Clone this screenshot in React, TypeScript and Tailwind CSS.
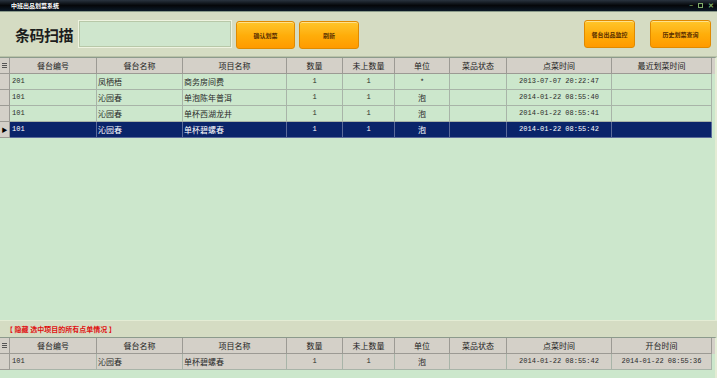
import React from "react";

const cols = "grid grid-cols-[10px_87px_86px_104px_56px_52px_55px_57px_105px_100px]";

const topHead = ["餐台编号", "餐台名称", "项目名称", "数量", "未上数量", "单位", "菜品状态", "点菜时间", "最近划菜时间"];
const bottomHead = ["餐台编号", "餐台名称", "项目名称", "数量", "未上数量", "单位", "菜品状态", "点菜时间", "开台时间"];

type Row = { no: string; table: string; item: string; qty: string; left: string; unit: string; status: string; time: string; last: string };

const rows: Row[] = [
  { no: "201", table: "凤栖梧", item: "商务房间费", qty: "1", left: "1", unit: "*", status: "", time: "2013-07-07 20:22:47", last: "" },
  { no: "101", table: "沁园春", item: "单泡陈年普洱", qty: "1", left: "1", unit: "泡", status: "", time: "2014-01-22 08:55:40", last: "" },
  { no: "101", table: "沁园春", item: "单杯西湖龙井", qty: "1", left: "1", unit: "泡", status: "", time: "2014-01-22 08:55:41", last: "" },
  { no: "101", table: "沁园春", item: "单杯碧螺春", qty: "1", left: "1", unit: "泡", status: "", time: "2014-01-22 08:55:42", last: "" },
];

const cjk = "font-['SimSun','Noto_Sans_CJK_SC',sans-serif]";
const mono = "font-['Liberation_Mono','Noto_Sans_CJK_SC',monospace] font-normal text-[7px]";

function HeaderRow({ labels }: { labels: string[] }) {
  return (
    <div className={`${cols} h-[16px] bg-[#d4d0c8] text-[8px] text-[#222]`}>
      <div className="flex items-center justify-center border-r border-b border-[#9c9a94]">
        <span className="block w-[5px] h-[5px] bg-[repeating-linear-gradient(to_bottom,#555_0_1px,#d4d0c8_1px_2px)]" />
      </div>
      {labels.map((l) => (
        <div key={l} className="flex items-center justify-center border-r border-b border-[#9c9a94] leading-none">
          {l}
        </div>
      ))}
    </div>
  );
}

function DataRow({ r, selected, bg, last }: { r: Row; selected?: boolean; bg: string; last: string }) {
  const cell = selected
    ? "border-r border-b border-[#5a6a9a] bg-[#0a246a] text-white"
    : `border-r border-b border-[#a8b4a8] ${bg} text-[#2a2a2a]`;
  return (
    <div className={`${cols} h-[16px] text-[8px]`}>
      <div className="flex items-center justify-center border-r border-b border-[#9c9a94] bg-[#d4d0c8]">
        {selected && <span className="text-[6px] leading-none text-black">▶</span>}
      </div>
      <div className={`${cell} ${mono} flex items-center pl-[2px]`}>{r.no}</div>
      <div className={`${cell} flex items-center pl-[1px]`}>{r.table}</div>
      <div className={`${cell} flex items-center pl-[1px]`}>{r.item}</div>
      <div className={`${cell} ${mono} flex items-center justify-center`}>{r.qty}</div>
      <div className={`${cell} ${mono} flex items-center justify-center`}>{r.left}</div>
      <div className={`${cell} flex items-center justify-center`}>{r.unit}</div>
      <div className={`${cell} flex items-center justify-center`}>{r.status}</div>
      <div className={`${cell} ${mono} flex items-center justify-center`}>{r.time}</div>
      <div className={`${cell} ${mono} flex items-center justify-center`}>{last}</div>
    </div>
  );
}

function OrangeButton({ label, w }: { label: string; w: string }) {
  return (
    <button
      type="button"
      className={`${w} h-[28px] rounded-[3px] border border-[#e08a00] bg-gradient-to-b from-[#ffc629] via-[#ffae0a] to-[#ff9a00] text-[6px] font-bold text-[#5a3000] shadow-[inset_0_1px_0_#ffe08a]`}
    >
      {label}
    </button>
  );
}

export default function App() {
  return (
    <div className={`w-[717px] h-[392px] bg-white flex flex-col overflow-hidden ${cjk}`}>
      {/* title bar */}
      <div className="h-[12px] flex items-center justify-between px-[11px] bg-gradient-to-b from-[#2a3440] via-[#05070a] to-[#0c1a28] border-b border-[#8a9a8a]">
        <span className="text-[6px] font-bold text-white leading-none">中班出品划菜系统</span>
        <div className="flex items-center gap-[5px] mr-[-8px] text-[7px] leading-none font-bold text-[#7fae6a]">
          <span>–</span>
          <span className="block w-[5px] h-[5px] border border-[#7fae6a]" />
          <span>✕</span>
        </div>
      </div>

      {/* scan bar */}
      <div className="h-[45px] flex items-center bg-[#d5dcc3] border-b border-[#b9c2a8] pr-[6px]">
        <span className="ml-[15px] text-[15px] font-bold text-[#1c1c1c] leading-none tracking-[-0.5px]">条码扫描</span>
        <div className="ml-[5px] w-[154px] h-[28px] bg-[#cfe6cd] border border-[#eef3e0] shadow-[inset_0_0_0_1px_#b8c8a8]" />
        <div className="ml-[4px]">
          <OrangeButton label="确认划菜" w="w-[59px]" />
        </div>
        <div className="ml-[4px]">
          <OrangeButton label="刷新" w="w-[60px]" />
        </div>
        <div className="ml-auto flex gap-[15px]">
          <OrangeButton label="餐台出品监控" w="w-[51px]" />
          <OrangeButton label="历史划菜查询" w="w-[61px]" />
        </div>
      </div>

      {/* main grid */}
      <div className="h-[263px] bg-[#cce7cc] border-t border-[#8c9a8c] border-r-2 border-r-[#e4ecd4]">
        <HeaderRow labels={topHead} />
        {rows.map((r, i) => (
          <DataRow key={i} r={r} selected={i === 3} bg="bg-[#cce7cc]" last={r.last} />
        ))}
      </div>

      {/* hint bar */}
      <div className="h-[17px] flex items-center bg-[#d5dcc3] pl-[6px] border-t border-[#e4ecd4]">
        <span className="text-[7px] font-bold text-[#e01010] leading-none">【 隐藏 选中项目的所有点单情况 】</span>
      </div>

      {/* detail grid */}
      <div className="h-[41px] bg-[#cce7cc] border-t border-[#8c9a8c] border-r-2 border-r-[#e4ecd4]">
        <HeaderRow labels={bottomHead} />
        <DataRow r={rows[3]} bg="bg-[#d4d0c8]" last="2014-01-22 08:55:36" />
      </div>

      <div className="flex-1 bg-white" />
    </div>
  );
}
